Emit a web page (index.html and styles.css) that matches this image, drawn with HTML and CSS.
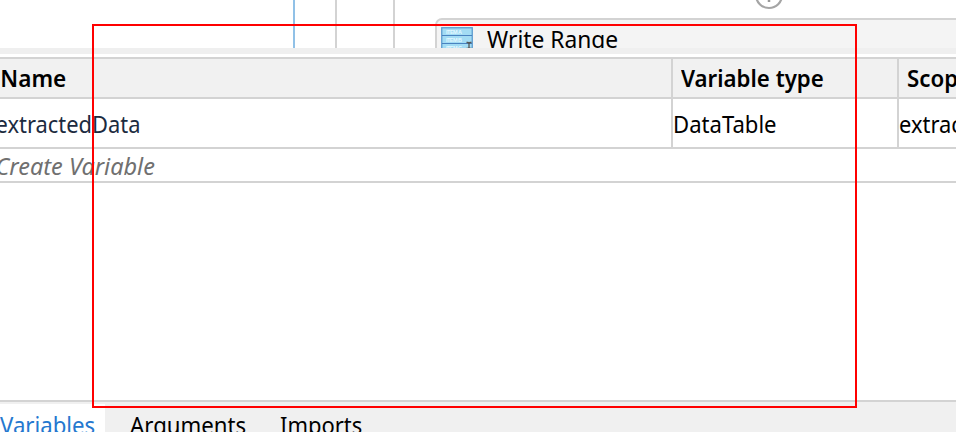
FILE: index.html
```html
<!DOCTYPE html>
<html lang="en">
<head>
<meta charset="utf-8">
<title>Variables</title>
<link rel="stylesheet" href="styles.css">
</head>
<body>
<main class="app">
  <section class="designer">
    <div class="guide guide-blue"></div>
    <div class="guide guide-mid"></div>
    <div class="guide guide-last"></div>
    <div class="sequence">
      <div class="connector">
        <svg width="30" height="10" viewBox="0 0 30 10"><circle cx="15" cy="-5" r="13" fill="#fff" stroke="#a5a5a5" stroke-width="2.2"/><path d="M15-10V2" stroke="#999" stroke-width="2.5"/></svg>
      </div>
      <article class="activity">
        <svg class="activity-icon" width="32" height="24" viewBox="0 0 32 24">
          <rect x=".75" y=".75" width="30.5" height="26" fill="#a3dcf4" stroke="#5a9bd0" stroke-width="1.3"/>
          <path d="M1 8.5H31M1 16.5H31" stroke="#4a83c0" stroke-width="1.2"/>
          <g class="sheet-label"><text x="5" y="7" textLength="16">ITEM A</text><text x="5" y="15" textLength="16">ITEM B</text><text x="5" y="22.5" textLength="16">ITEM C</text></g>
          <path d="M25.5 15.5H27L28 16.5L29 15.5H30.5M28 16V21M25.5 21.5H27L28 20.5L29 21.5H30.5" fill="none" stroke="#555" stroke-width="1.3"/>
        </svg>
        <span class="activity-title"><span class="t-write">Write Range</span></span>
      </article>
    </div>
  </section>
  <div class="splitter"></div>
  <section class="variables">
    <div class="row header">
      <div class="cell"><span class="t-name">Name</span></div>
      <div class="cell"><span class="t-type">Variable type</span></div>
      <div class="cell"><span class="t-scope">Scope</span></div>
    </div>
    <div class="row entry">
      <div class="cell variable-name"><span class="t-data">extractedData</span></div>
      <div class="cell"><span class="t-table">DataTable</span></div>
      <div class="cell"><span class="t-extract">extractedData</span></div>
    </div>
    <div class="create"><span class="t-create">Create Variable</span></div>
  </section>
  <nav class="tabs">
    <div class="tab active"><span class="t-vars">Variables</span></div>
    <div class="tab arguments"><span class="t-args">Arguments</span></div>
    <div class="tab imports"><span class="t-imports">Imports</span></div>
  </nav>
  <div class="highlight"></div>
</main>
</body>
</html>
```
FILE: styles.css
```css
* { box-sizing: border-box; }
body { margin: 0; background: #fff; }
.app {
  position: relative;
  display: flex;
  flex-direction: column;
  width: 956px;
  height: 432px;
  overflow: hidden;
  font: 23.5px/32px "Noto Sans", "Open Sans", sans-serif;
  color: #000;
  white-space: nowrap;
}
.designer {
  display: grid;
  grid-template-columns: 293px 42px 58px 1fr;
  height: 48px;
  overflow: hidden;
}
.guide { border-right: 2px solid #d3d3d3; }
.guide-blue { width: 295px; border-color: #91c1e7; }
.guide-mid { width: 44px; }
.guide-last { width: 60px; }
.sequence { padding-left: 42px; }
.connector { height: 18px; padding-left: 319px; }
.connector svg { display: block; }
.activity {
  display: flex;
  width: 560px;
  height: 60px;
  padding: 7px 0 0 4px;
  border: 2px solid #d3d3d3;
  border-radius: 7px;
  background: #f4f4f4;
}
.activity-icon { flex: none; }
.sheet-label { font: bold 5.5px "Liberation Sans", sans-serif; fill: #e2f8ff; }
.activity-title { margin: -4px 0 0 14px; }
.splitter { height: 9px; background: #efefef; border-bottom: 3px solid #fff; }
.variables { height: 343px; border-top: 2px solid #d3d3d3; }
.row {
  display: grid;
  grid-template-columns: 671px 226px 1fr;
  border-bottom: 2px solid #d3d3d3;
}
.cell { overflow: hidden; }
.cell + .cell { border-left: 2px solid #d3d3d3; }
.header { height: 40px; background: #f1f1f1; font-weight: 600; }
.header .cell { padding: 3px 0 0 8px; }
.header .cell:first-child { padding-left: 0; }
.entry { height: 50px; }
.entry .cell { padding-top: 9px; }
.variable-name { color: #1c2b40; }
.create { height: 34px; padding-top: 1px; border-bottom: 2px solid #d3d3d3; color: #707070; font-style: italic; }
.tabs { display: flex; height: 32px; border-top: 2px solid #d3d3d3; background: #f0f0f0; }
.tab { padding-top: 7px; height: 30px; }
.active { width: 105px; margin-top: 2px; padding-top: 5px; background: #fff; color: #2578cf; }
.arguments { padding-left: 25px; width: 175px; }
.tab span, .cell span, .create span, .t-write { display: inline-block; transform-origin: 0 50%; }
.t-write { transform: scaleX(.97); }
.t-name { transform: translateX(.3px) scaleX(.96); }
.t-type, .t-scope { transform: scaleX(.947); }
.t-data { transform: translateX(-4.5px) scaleX(.932); }
.t-table { transform: scaleX(.94); }
.t-extract { transform: scaleX(.932); }
.t-create { transform: translateX(-4.5px); }
.t-vars, .t-args { transform: scaleX(.945); }
.t-imports { transform: scaleX(.935); }
.highlight { position: absolute; left: 92px; top: 24px; width: 765px; height: 384px; border: 2px solid #f00; }
```
